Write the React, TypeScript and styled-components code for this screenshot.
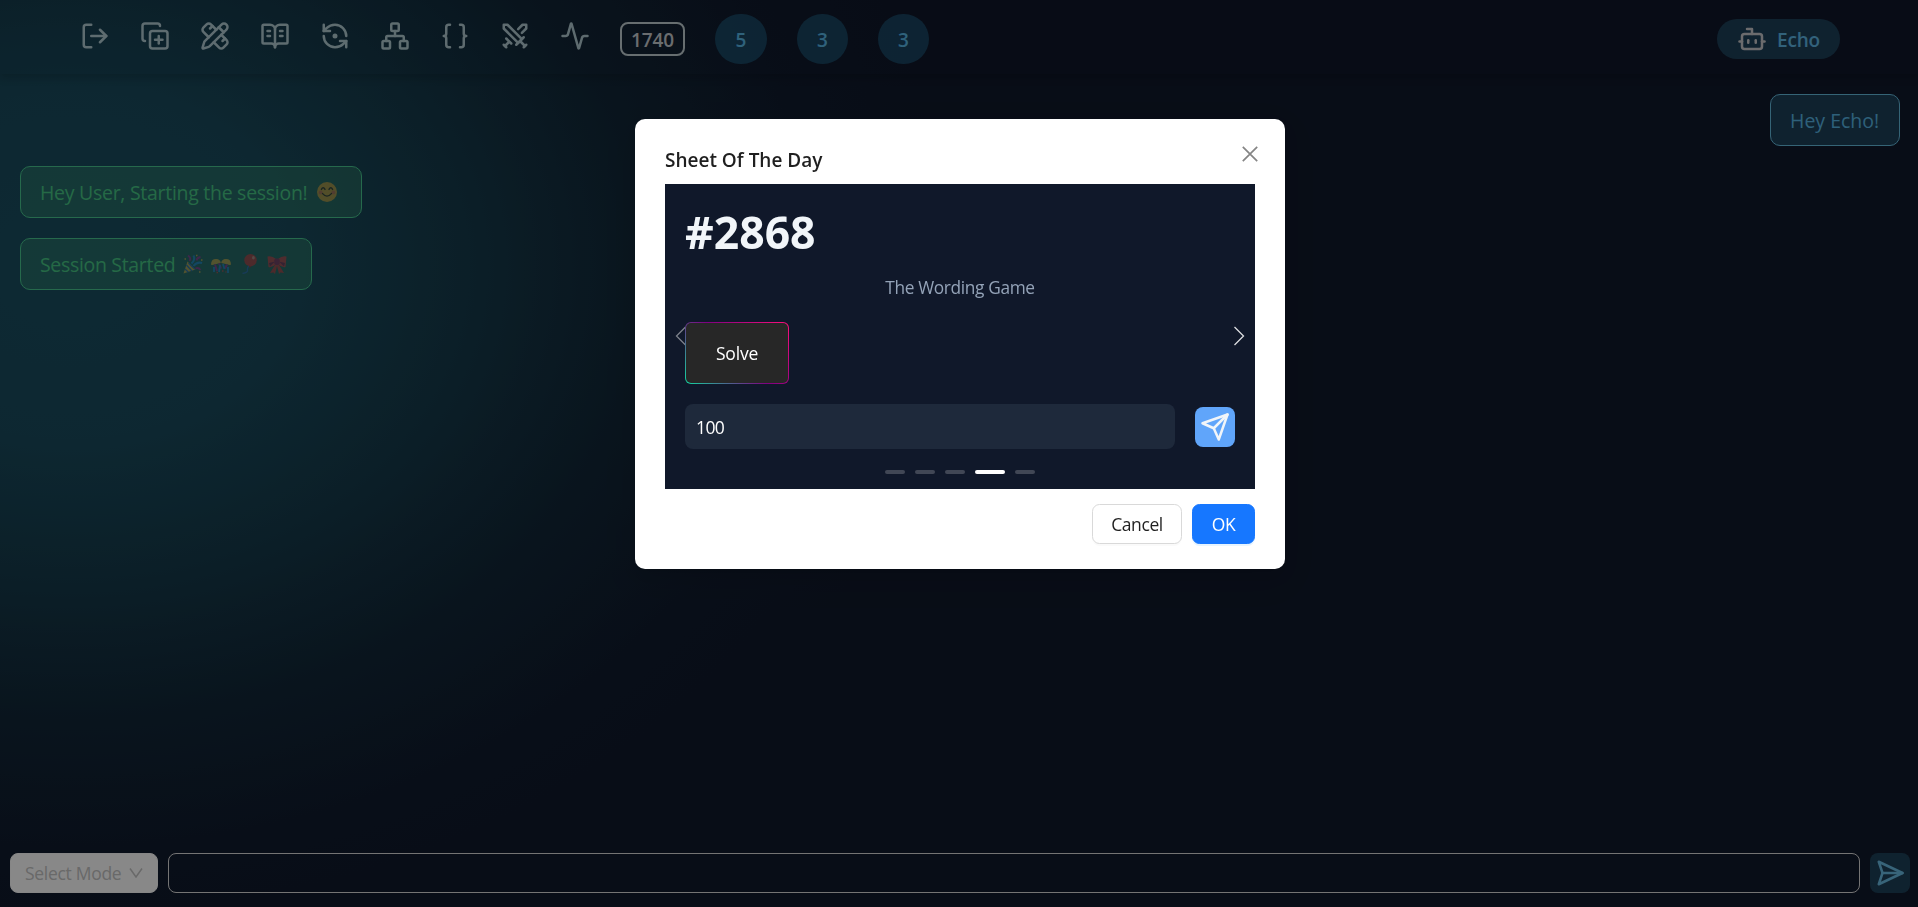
import React from "react";
import styled, { createGlobalStyle } from "styled-components";
import {
  LogOut,
  CopyPlus,
  PencilRuler,
  BookOpenText,
  RefreshCcwDot,
  Network,
  Braces,
  Swords,
  Activity,
  Bot,
} from "lucide-react";

const GlobalStyle = createGlobalStyle`
  *, *::before, *::after { box-sizing: border-box; }
  body {
    margin: 0;
    background: #0f172a;
    font-family: "Open Sans", "Noto Sans", sans-serif;
    overflow: hidden;
  }
  h1, p { margin: 0; }
  button, input { font-family: inherit; }
`;

const Page = styled.div`
  display: flex;
  flex-direction: column;
  height: 907px;
  background:
    radial-gradient(ellipse 880px 690px at 70px 265px,
      rgba(27, 88, 106, 0.82) 0%,
      rgba(27, 86, 104, 0.78) 25%,
      rgba(24, 76, 91, 0.64) 45%,
      rgba(20, 58, 72, 0.42) 65%,
      rgba(16, 38, 56, 0.18) 85%,
      rgba(15, 23, 42, 0) 100%),
    #10182a;
`;

const Header = styled.header`
  display: flex;
  align-items: center;
  justify-content: space-between;
  flex: none;
  height: 74px;
  padding: 0 78px 0 80px;
  background: rgba(15, 23, 42, 0.06);
  box-shadow: 0 4px 8px rgba(0, 0, 0, 0.16);
`;

const Tools = styled.nav`
  display: flex;
  align-items: center;
  gap: 30px;
  padding-top: 4px;
`;

const ToolButton = styled.button`
  display: flex;
  width: 30px;
  height: 30px;
  margin-bottom: 6px;
  padding: 0;
  border: 0;
  background: none;
  color: #b4cdd3;
  opacity: 0.95;
`;

const Score = styled.div`
  width: 65px;
  height: 34px;
  border: 2px solid #bcc9cd;
  border-radius: 8px;
  color: #c2c7cb;
  font-size: 19px;
  font-weight: 600;
  line-height: 32px;
  letter-spacing: -0.1px;
  text-align: center;
`;

const Count = styled.div<{ $width: number }>`
  width: ${(p) => p.$width}px;
  height: 50px;
  border-radius: 26px;
  background: rgba(38, 140, 185, 0.36);
  color: #56b2e0;
  font-size: 19px;
  font-weight: 600;
  line-height: 52px;
  text-align: center;
`;

const EchoPill = styled.div`
  display: flex;
  align-items: center;
  gap: 10px;
  width: 123px;
  height: 40px;
  margin-top: 4px;
  padding-left: 20px;
  border-radius: 20px;
  background: #1d3f57;
  color: #5cb2e0;
  font-size: 19px;
  font-weight: 600;
  line-height: 42px;
  letter-spacing: -0.2px;

  svg { color: #c4c4c6; }
`;

const EchoName = styled.span`
  padding-top: 2px;
`;

const Chat = styled.main`
  display: flex;
  flex: 1;
  flex-direction: column;
  gap: 20px;
  padding: 20px 18px 20px 20px;
`;

const Bubble = styled.div<{ $mine?: boolean; $width: number; $spacing: number }>`
  display: flex;
  align-items: center;
  align-self: ${(p) => (p.$mine ? "flex-end" : "flex-start")};
  width: ${(p) => p.$width}px;
  height: 52px;
  padding: 0 19px;
  border: 1px solid ${(p) => (p.$mine ? "#62b6d8" : "#45c08a")};
  border-radius: 10px;
  background: ${(p) => (p.$mine ? "#1d3f57" : "rgba(60, 152, 116, 0.38)")};
  color: ${(p) => (p.$mine ? "#54b0de" : "#44c080")};
  font-size: 19.5px;
  letter-spacing: ${(p) => p.$spacing}px;
  white-space: nowrap;
`;

const EmojiRow = styled.span`
  display: flex;
  gap: 8px;
  margin-left: auto;
  padding-right: 5px;
  opacity: 0.55;
`;

const Composer = styled.footer`
  display: flex;
  flex: none;
  gap: 10px;
  padding: 0 8px 14px 10px;
`;

const ModeSelect = styled.button`
  display: flex;
  align-items: center;
  justify-content: space-between;
  width: 148px;
  height: 40px;
  padding: 0 14px;
  border: 1px solid #f4f4f4;
  border-radius: 8px;
  background: #f8f8f8;
  color: #bfbfbf;
  font-size: 17.5px;
  letter-spacing: -0.3px;
  white-space: nowrap;
`;

const MessageInput = styled.input`
  flex: 1;
  height: 40px;
  padding: 0 12px;
  border: 1px solid #d4d4d4;
  border-radius: 8px;
  background: transparent;
  color: #fff;
`;

const SendMessage = styled.button`
  display: flex;
  align-items: center;
  justify-content: center;
  width: 40px;
  height: 40px;
  padding: 0;
  border: 0;
  border-radius: 8px;
  background: #1d3f57;
  color: #66b6dc;
`;

const Backdrop = styled.div`
  position: fixed;
  inset: 0;
  display: flex;
  align-items: flex-start;
  justify-content: center;
  padding: 119px 0 0 2px;
  background: rgba(0, 0, 0, 0.45);
`;

const Dialog = styled.section`
  position: relative;
  width: 650px;
  height: 450px;
  padding: 25px 30px;
  border-radius: 10px;
  background: #fff;
  box-shadow:
    0 7px 20px rgba(0, 0, 0, 0.08),
    0 4px 8px -5px rgba(0, 0, 0, 0.12),
    0 11px 35px 10px rgba(0, 0, 0, 0.05);
`;

const DialogTitle = styled.div`
  height: 30px;
  margin-bottom: 10px;
  color: #1f1f1f;
  font-size: 19px;
  font-weight: 600;
  line-height: 33px;
  letter-spacing: 0;
`;

const CloseButton = styled.button`
  position: absolute;
  top: 21px;
  right: 21px;
  display: flex;
  align-items: center;
  justify-content: center;
  width: 28px;
  height: 28px;
  padding: 0;
  border: 0;
  background: none;
  color: #858585;
`;

const Carousel = styled.div`
  position: relative;
  height: 305px;
  padding: 20px;
  background: #10182a;
`;

const Slide = styled.div`
  position: relative;
  display: flex;
  flex-direction: column;
  gap: 20px;
`;

const PuzzleNumber = styled.h1`
  height: 50px;
  color: #f1f5f9;
  font-size: 44.5px;
  font-weight: 700;
  line-height: 55px;
  letter-spacing: 0;
`;

const PuzzleName = styled.p`
  height: 28px;
  color: #94a3b8;
  font-size: 17.3px;
  line-height: 28px;
  letter-spacing: -0.35px;
  text-align: center;
`;

const SolveButton = styled.button`
  width: 104px;
  height: 62px;
  padding: 0;
  border: 1px solid transparent;
  border-radius: 6px;
  background:
    linear-gradient(#272727, #272727) padding-box,
    linear-gradient(45deg, #12d6a0, #800080, #ff0f7b) border-box;
  color: #fff;
  font-size: 17.5px;
  letter-spacing: -0.2px;
`;

const AnswerRow = styled.div`
  display: flex;
  align-items: center;
  gap: 20px;
`;

const AnswerInput = styled.input`
  flex: 1;
  min-width: 0;
  height: 45px;
  padding: 1px 10px 0 11px;
  border: 0;
  border-radius: 8px;
  background: #1e293b;
  color: #fff;
  font-size: 17.5px;
  letter-spacing: -0.6px;
`;

const AnswerSend = styled.button`
  display: flex;
  align-items: center;
  justify-content: center;
  width: 40px;
  height: 40px;
  padding: 0;
  border: 0;
  border-radius: 8px;
  background: #60a5fa;
  color: #f1f5f9;
`;

const Arrow = styled.span<{ $side: "left" | "right" }>`
  position: absolute;
  top: 142px;
  ${(p) => p.$side}: 10px;
  display: flex;
  color: #fff;
  opacity: ${(p) => (p.$side === "left" ? 0.45 : 0.85)};
`;

const Dots = styled.div`
  position: absolute;
  right: 0;
  bottom: 15px;
  left: 0;
  display: flex;
  justify-content: center;
  gap: 10px;
`;

const Dot = styled.span<{ $active?: boolean }>`
  width: ${(p) => (p.$active ? 30 : 20)}px;
  height: 4px;
  border-radius: 2px;
  background: ${(p) => (p.$active ? "#fff" : "#414755")};
`;

const DialogFooter = styled.div`
  display: flex;
  justify-content: flex-end;
  gap: 10px;
  margin-top: 15px;
`;

const DialogButton = styled.button<{ $primary?: boolean }>`
  width: ${(p) => (p.$primary ? 63 : 90)}px;
  height: 40px;
  padding: 0;
  border: 1px solid ${(p) => (p.$primary ? "#1677ff" : "#d9d9d9")};
  border-radius: 7.5px;
  background: ${(p) => (p.$primary ? "#1677ff" : "#fff")};
  box-shadow: 0 2px 0 ${(p) => (p.$primary ? "rgba(5, 145, 255, 0.1)" : "rgba(0, 0, 0, 0.02)")};
  color: ${(p) => (p.$primary ? "#fff" : "#1f1f1f")};
  font-size: 17.5px;
  letter-spacing: -0.4px;
`;

const Smile = () => (
  <svg width="20" height="20" viewBox="0 0 20 20">
    <circle cx="10" cy="10" r="10" fill="#f2b13c" />
    <circle cx="3.6" cy="10.4" r="2" fill="#f07a52" />
    <circle cx="16.4" cy="10.4" r="2" fill="#f07a52" />
    <path d="M4.4 7.4q1.8-3.2 3.6 0M12 7.4q1.8-3.2 3.6 0M5.6 11.6q4.4 5 8.8 0" fill="none" stroke="#3b2a20" strokeWidth="1.4" strokeLinecap="round" />
  </svg>
);

const Popper = () => (
  <svg width="20" height="20" viewBox="0 0 20 20">
    <path d="M0.5 19.5 4.5 7.5 12.5 15.5Z" fill="#f2c14a" />
    <path d="M3.4 11 9 17M2 15l3.4 3.3M5.5 9 12 15.4" stroke="#2f6fd0" strokeWidth="1.3" />
    <path d="M8.5 9.5Q12.5 6 10.5 1.5M10.5 12Q14 7.5 19 9" fill="none" stroke="#2196f3" strokeWidth="2" />
    <path d="M5 1.5Q8.5 4 6.5 7M12.5 14.5q3-1.5 5 1.5M13.5 6.5Q14 3.5 17.5 3" fill="none" stroke="#b32aa5" strokeWidth="1.8" />
    <path d="M1.5 5h1.5M13 1.5h1.5M18 6h1.5M16 18h1.5" stroke="#f2c14a" strokeWidth="1.4" />
  </svg>
);

const ConfettiBall = () => (
  <svg width="20" height="20" viewBox="0 0 20 20">
    <path d="M0.5 11A4.8 4.8 0 0 1 9.5 8ZM19.5 11A4.8 4.8 0 0 0 10.5 8Z" fill="#f2c14a" />
    <path d="M0.5 11Q-0.5 5 5 5Q9 5 9.8 9ZM19.5 11Q20.500 5 15 5Q11 5 10.200 9Z" fill="#f2c14a" />
    <path d="M4 10.500 6 17M8 9.500l2 5M16 10.500l-2 4" stroke="#b32aa5" strokeWidth="2" />
    <path d="M3 13v5M9 11 8 18M12 10l1.500 5M17 13v6" stroke="#2196f3" strokeWidth="1.800" />
    <path d="M5.500 18.500h1.500M11 17h1.500M14.500 18h1" stroke="#e5484d" strokeWidth="1.500" />
  </svg>
);

const Balloon = () => (
  <svg width="20" height="20" viewBox="0 0 20 20">
    <path d="M10 12Q8 13.500 8.500 16T3.500 19.500" fill="none" stroke="#2f6fd0" strokeWidth="1.300" />
    <ellipse cx="11.500" cy="6.200" rx="6.200" ry="6.200" fill="#e0393f" />
    <path d="m9.500 13.600 1.200-2 1.800 1.500Z" fill="#c02a35" />
    <ellipse cx="14.400" cy="3.800" rx="1.400" ry="1.700" fill="#f59a94" />
  </svg>
);

const Bow = () => (
  <svg width="20" height="20" viewBox="0 0 20 20">
    <path d="m8.500 10-5.500 9 3.500-.500 1.500 1.500 2-8 2 8 1.500-1.500 3.500.500-5.500-9Z" fill="#e0393f" />
    <path d="M0.500 2.500Q5 1.500 9 5V10Q5 14 1.500 13ZM19.500 2.500Q15 1.500 11 5V10Q15 14 18.500 13Z" fill="#e8404a" />
    <path d="M2 9 8 7.500 3 12.500ZM18 9l-6-1.500 5 5Z" fill="#8d1f56" />
    <rect x="7.300" y="4.500" width="5.400" height="6.500" rx="1.800" fill="#a52360" />
  </svg>
);

const tools = [
  LogOut,
  CopyPlus,
  PencilRuler,
  BookOpenText,
  RefreshCcwDot,
  Network,
  Braces,
  Swords,
  Activity,
];

export default function App() {
  return (
    <>
      <GlobalStyle />
      <Page>
        <Header>
          <Tools>
            {tools.map((Icon, i) => (
              <ToolButton key={i}>
                <Icon size={30} strokeWidth={2} />
              </ToolButton>
            ))}
            <Score>1740</Score>
            <Count $width={52}>5</Count>
            <Count $width={51}>3</Count>
            <Count $width={51}>3</Count>
          </Tools>
          <EchoPill>
            <Bot size={30} />
            <EchoName>Echo</EchoName>
          </EchoPill>
        </Header>

        <Chat>
          <Bubble $mine $width={130} $spacing={0}>Hey Echo!</Bubble>
          <Bubble $width={342} $spacing={-0.28}>
            Hey User, Starting the session!
            <EmojiRow><Smile /></EmojiRow>
          </Bubble>
          <Bubble $width={292} $spacing={-0.32}>
            Session Started
            <EmojiRow>
              <Popper />
              <ConfettiBall />
              <Balloon />
              <Bow />
            </EmojiRow>
          </Bubble>
        </Chat>

        <Composer>
          <ModeSelect>
            Select Mode
            <svg width="14" height="10" viewBox="0 0 14 10" fill="none" stroke="currentColor" strokeWidth="1.5">
              <path d="M1 0.500 7 9 13 0.500" />
            </svg>
          </ModeSelect>
          <MessageInput />
          <SendMessage>
            <svg width="30" height="30" viewBox="0 0 24 24" fill="none" stroke="currentColor" strokeWidth="2" strokeLinecap="round" strokeLinejoin="round">
              <path d="m3 3 3 9-3 9 19-9Z" />
              <path d="M6 12h16" />
            </svg>
          </SendMessage>
        </Composer>
      </Page>

      <Backdrop>
        <Dialog>
          <DialogTitle>Sheet Of The Day</DialogTitle>
          <CloseButton>
            <svg width="16" height="16" viewBox="0 0 16 16" fill="none" stroke="currentColor" strokeWidth="1.700">
              <path d="M0.800 0.800 15.200 15.200M15.200 0.800 0.800 15.200" />
            </svg>
          </CloseButton>
          <Carousel>
            <Arrow $side="left">
              <svg width="12" height="20" viewBox="0 0 12 20" fill="none" stroke="currentColor" strokeWidth="1.300">
                <path d="M10.500 1 1.500 10l9 9" />
              </svg>
            </Arrow>
            <Arrow $side="right">
              <svg width="12" height="20" viewBox="0 0 12 20" fill="none" stroke="currentColor" strokeWidth="1.300">
                <path d="m1.500 1 9 9-9 9" />
              </svg>
            </Arrow>
            <Slide>
              <PuzzleNumber>#2868</PuzzleNumber>
              <PuzzleName>The Wording Game</PuzzleName>
              <SolveButton>Solve</SolveButton>
              <AnswerRow>
                <AnswerInput defaultValue="100" />
                <AnswerSend>
                  <svg width="30" height="30" viewBox="0 0 24 24" fill="none" stroke="currentColor" strokeWidth="2" strokeLinecap="round" strokeLinejoin="round">
                    <path d="m22 2-7 20-4-9-9-4Z" />
                    <path d="M22 2 11 13" />
                  </svg>
                </AnswerSend>
              </AnswerRow>
            </Slide>
            <Dots>
              <Dot />
              <Dot />
              <Dot />
              <Dot $active />
              <Dot />
            </Dots>
          </Carousel>
          <DialogFooter>
            <DialogButton>Cancel</DialogButton>
            <DialogButton $primary>OK</DialogButton>
          </DialogFooter>
        </Dialog>
      </Backdrop>
    </>
  );
}
